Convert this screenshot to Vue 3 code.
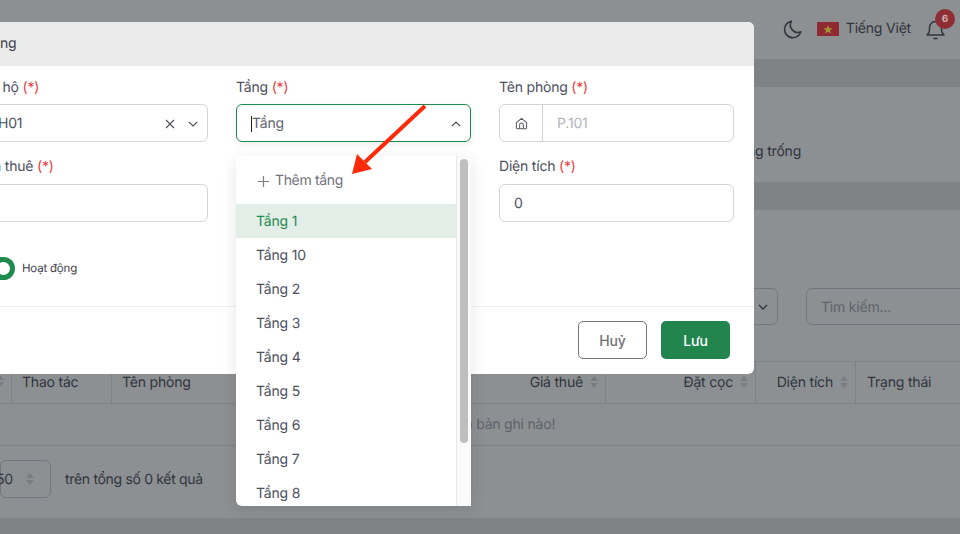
<script setup>
const floors = ['Tầng 1','Tầng 10','Tầng 2','Tầng 3','Tầng 4','Tầng 5','Tầng 6','Tầng 7','Tầng 8','Tầng 9']
</script>

<template>
  <div class="page">
    <header class="topbar">
      <svg class="moon" width="19" height="19" viewBox="0 0 19 19" fill="none" stroke="#30343f" stroke-width="1.6" stroke-linecap="round" stroke-linejoin="round"><path d="M8.5 1.2a8.3 8.3 0 1 0 9.3 10.6A7.4 7.4 0 0 1 8.5 1.2z"/></svg>
      <svg class="flag" width="22" height="14" viewBox="0 0 22 14"><rect width="22" height="14" fill="#8f2a33"/><polygon points="11,3 12.2,6.2 15.6,6.3 12.9,8.4 13.9,11.6 11,9.7 8.1,11.6 9.1,8.4 6.4,6.3 9.8,6.2" fill="#a59436"/></svg>
      <span class="lang">Tiếng Việt</span>
      <span class="bell">
        <svg width="19" height="20" viewBox="0 0 19 20" fill="none" stroke="#30343f" stroke-width="1.5" stroke-linecap="round" stroke-linejoin="round"><path d="M1 15c1.6-1.3 2.5-2.6 2.5-5V7.5a6 6 0 0 1 12 0V10c0 2.4.9 3.7 2.500 5z"/><path d="M8 18.500h3"/></svg>
        <b class="badge">6</b>
      </span>
    </header>
    <div class="band"></div>
    <section class="stats"><span>Phòng trống</span></section>
    <div class="band"></div>
    <section class="list">
      <div class="tools">
        <div class="bg-select"><svg width="10" height="6" viewBox="0 0 10 6" fill="none" stroke="#30343c" stroke-width="1.3"><path d="M1 1l4 4 4-4"/></svg></div>
        <div class="bg-search">Tìm kiếm...</div>
      </div>
      <div class="thead">
        <div class="th c0"><i class="sort"></i></div>
        <div class="th c1">Thao tác</div>
        <div class="th c2">Tên phòng</div>
        <div class="th c3 right">Giá thuê<i class="sort"></i></div>
        <div class="th c4 right">Đặt cọc<i class="sort"></i></div>
        <div class="th c5 right">Diện tích<i class="sort"></i></div>
        <div class="th c6">Trạng thái</div>
      </div>
      <div class="empty">Không có bản ghi nào!</div>
      <div class="pager">
        <div class="size"><span>50</span><i class="sort"></i></div>
        <span class="total">trên tổng số 0 kết quả</span>
      </div>
    </section>
    <div class="band end"></div>

    <div class="modal">
      <div class="m-head">Phòng</div>
      <div class="m-body">
        <div class="field">
          <label>Căn hộ <em>(*)</em></label>
          <div class="input">
            <span class="val">CH01</span>
            <svg class="x" width="10" height="10" viewBox="0 0 10 10" stroke="#4d505c" stroke-width="1.1"><path d="M1 1l8 8M9 1l-8 8"/></svg>
            <svg class="chev" width="10" height="6" viewBox="0 0 10 6" fill="none" stroke="#4d505c" stroke-width="1.2"><path d="M.8.8L5 5 9.2.8"/></svg>
          </div>
        </div>
        <div class="field">
          <label>Tầng <em>(*)</em></label>
          <div class="input focus">
            <i class="caret"></i><span class="ph">Tầng</span>
            <svg class="chev" width="10" height="6" viewBox="0 0 10 6" fill="none" stroke="#4d505c" stroke-width="1.2"><path d="M.8 5.200L5 1l4.200 4.200"/></svg>
          </div>
        </div>
        <div class="field">
          <label>Tên phòng <em>(*)</em></label>
          <div class="input group">
            <span class="addon">
              <svg width="13" height="13" viewBox="0 0 14 14" fill="none" stroke="#555864" stroke-width="1.1" stroke-linejoin="round"><path d="M1.500 6L7 1.500 12.500 6v5.600a1 1 0 0 1-1 1h-9a1 1 0 0 1-1-1z"/><path d="M5 12.500V8.500a2 2 0 0 1 4 0v4"/></svg>
            </span>
            <span class="placeholder">P.101</span>
          </div>
        </div>
        <div class="field second">
          <label>Tiền thuê <em>(*)</em></label>
          <div class="input"></div>
        </div>
        <div class="field second"></div>
        <div class="field second">
          <label>Diện tích <em>(*)</em></label>
          <div class="input"><span class="val">0</span></div>
        </div>
        <div class="status"><i class="toggle"></i><span>Hoạt động</span></div>
      </div>
      <div class="m-foot">
        <button class="btn cancel">Huỷ</button>
        <button class="btn save">Lưu</button>
      </div>
    </div>

    <div class="dropdown">
      <div class="menu">
        <div class="add">
          <svg width="11" height="11" viewBox="0 0 11 11" stroke="#7d7f88" stroke-width="1.2"><path d="M5.500 0v11M0 5.500h11"/></svg>
          <span>Thêm tầng</span>
        </div>
        <div v-for="(f, i) in floors" :key="f" class="opt" :class="{ on: i === 0 }">{{ f }}</div>
      </div>
      <div class="track"><i class="thumb"></i></div>
    </div>

    <svg class="arrow" width="80" height="75" viewBox="0 0 80 75"><path d="M74 2L14 58" stroke="#ff2a0a" stroke-width="4"/><polygon points="1,70 6,50 21,65" fill="#ff2a0a"/></svg>
  </div>
</template>

<style>
html, body { margin: 0; overflow: hidden; }
</style>

<style scoped>
.page {
  position: relative; width: 960px; height: 534px; overflow: hidden;
  background: #8d9092; color: #2f3340;
  font: 14px/20px Inter, "Liberation Sans", sans-serif;
  text-rendering: geometricPrecision;
  letter-spacing: -0.2px;
}
.topbar { height: 59px; display: flex; align-items: center; justify-content: flex-end; padding: 0 15px 1px 0; box-sizing: border-box; }
.moon { margin-right: 15px; }
.flag { margin-right: 7px; }
.lang { margin-right: 15px; color: #30343f; }
.bell { position: relative; display: flex; margin-top: 1px; }
.badge { position: absolute; left: 9px; top: -11px; width: 20px; height: 20px; border-radius: 50%; background: #8e2d34; color: #c9b3b3; font: 700 10px/20px Inter, sans-serif; text-align: center; }
.band { height: 28px; background: #808385; }
.band.end { height: 16px; }
.stats { height: 95px; display: flex; align-items: flex-end; box-sizing: border-box; padding: 0 0 20px 722px; }
.list { height: 308px; box-sizing: border-box; padding-top: 78px; }
.tools { height: 37px; display: flex; justify-content: flex-end; gap: 28px; margin-right: -28px; }
.bg-select { width: 60px; box-sizing: border-box; border: 1px solid #73767d; border-radius: 6px; display: flex; align-items: center; justify-content: flex-end; padding-right: 9px; }
.bg-search { width: 182px; box-sizing: border-box; border: 1px solid #73767d; border-radius: 6px; padding: 9px 14px 0; color: #5f626b; }
.thead { display: flex; height: 43px; margin-top: 36px; border-top: 1px solid #7e8185; border-bottom: 1px solid #7e8185; box-sizing: border-box; }
.th { box-sizing: border-box; border-right: 1px solid #7e8185; padding: 11px 10px 0; white-space: nowrap; display: flex; align-items: flex-start; color: #30343f; }
.th.right { justify-content: flex-end; }
.c0 { width: 12px; justify-content: flex-end; padding: 13px 6px 0 0; }
.c1 { width: 100px; }
.c2 { width: 237px; }
.c3 { width: 257px; padding-right: 6px; }
.c4 { width: 150px; padding-right: 6px; }
.c5 { width: 100px; padding-right: 6px; }
.c6 { flex: 1; border-right: 0; padding-left: 11px; }
.sort { display: inline-flex; flex-direction: column; gap: 2px; width: 9px; margin: 3px 0 0 7px; flex: none; }
.sort::before, .sort::after { content: ""; width: 0; height: 0; border-left: 4.5px solid transparent; border-right: 4.5px solid transparent; }
.sort::before { border-bottom: 5px solid #797c81; }
.sort::after { border-top: 5px solid #797c81; }
.c0 .sort { margin: 0; }
.empty { height: 42px; border-bottom: 1px solid #7e8185; box-sizing: border-box; text-align: center; line-height: 41px; color: #5f626b; padding-left: 6px; }
.pager { display: flex; align-items: center; gap: 14px; padding-top: 14px; }
.size { width: 51px; height: 38px; box-sizing: border-box; border: 1px solid #73767d; border-radius: 6px; display: flex; align-items: center; justify-content: space-between; padding-right: 15px; }
.size span { margin-left: -5px; padding-top: 2px; }
.size .sort { margin: 0; }
.total { color: #30343f; letter-spacing: -0.32px; padding-top: 2px; }

.modal { position: absolute; left: -47px; top: 22px; width: 801px; height: 352px; background: #fff; border-radius: 6px; overflow: hidden; color: #4c4f5c; }
.m-head { height: 44px; background: #eaeaea; padding: 12px 22px; box-sizing: border-box; color: #3e414c; }
.m-body { display: grid; grid-template-columns: repeat(3, 235px); column-gap: 28px; padding: 12px 20px 0; height: 241px; box-sizing: border-box; align-content: start; border-bottom: 1px solid #f0f0f0; }
.field { height: 80px; }
.field label { display: block; height: 26px; line-height: 20px; }
.second label { margin-top: -1px; height: 27px; }
em { font-style: normal; color: #ea4040; }
.input { height: 38px; box-sizing: border-box; border: 1px solid #d4d3dc; border-radius: 6px; display: flex; align-items: center; padding: 2px 9px 0 14px; }
.input.focus { border-color: #1f8a4d; box-shadow: 0 2px 6px rgba(0,0,0,.08); }
.val { flex: 1; }
.x { margin-right: 13px; }
.chev { margin-left: auto; }
.ph { color: #62646f; }
.caret { width: 1px; height: 16px; background: #222; }
.group { padding: 0; }
.addon { width: 42px; height: 100%; border-right: 1px solid #d4d3dc; display: flex; align-items: center; justify-content: center; }
.placeholder { padding: 2px 0 0 14px; color: #b3b4bd; }
.status { grid-column: 1 / -1; display: flex; align-items: center; gap: 7px; font-size: 11.500px; height: 24px; margin-top: 18px; color: #3e414c; }
.toggle { width: 42px; height: 23px; box-sizing: border-box; border-radius: 12px; background: #1f8a4d; position: relative; flex: none; }
.toggle::after { content: ""; position: absolute; right: 5px; top: 5px; width: 13px; height: 13px; border-radius: 50%; background: #fff; }
.m-foot { display: flex; justify-content: flex-end; gap: 14px; padding: 14px 24px 0 0; }
.btn { width: 69px; height: 38px; box-sizing: border-box; border-radius: 5px; font: 500 14px Inter, sans-serif; letter-spacing: -0.2px; }
.cancel { background: #fff; border: 1px solid #77787d; color: #717279; }
.save { background: #22854e; border: 0; color: #fff; }

.dropdown { position: absolute; left: 236px; top: 156px; width: 235px; height: 350px; background: #fff; border-radius: 6px 0 0 6px; overflow: hidden; display: flex; box-shadow: 0 4px 16px rgba(0,0,0,.1); color: #4c4f5c; }
.menu { width: 220px; flex: none; height: 350px; overflow: hidden; }
.add { height: 48px; padding: 2px 0 0 22px; box-sizing: border-box; color: #71737d; display: flex; align-items: center; gap: 6px; letter-spacing: -0.35px; }
.opt { height: 34px; padding: 8px 20px 0; box-sizing: border-box; }
.opt.on { background: #e4eee8; color: #1f8a4d; }
.track { flex: 1; background: #fafafa; border-left: 1px solid #e8e8e8; position: relative; }
.thumb { position: absolute; left: 3px; top: 3px; width: 8px; height: 284px; border-radius: 4px; background: #bebebe; }
.arrow { position: absolute; left: 351px; top: 104px; }
</style>
